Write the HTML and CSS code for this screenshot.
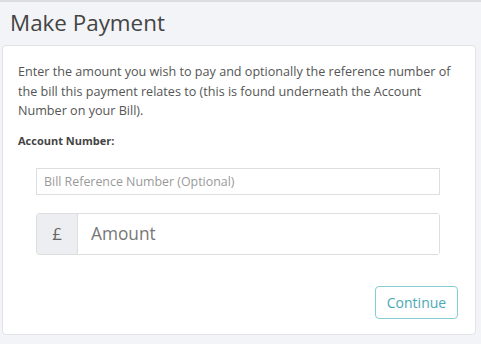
FILE: index.html
```html
<!DOCTYPE html>
<html>
<head>
<meta charset="utf-8">
<link rel="stylesheet" href="styles.css">
</head>
<body>
<div class="page">
  <h1 class="title">Make Payment</h1>
  <div class="card">
    <p class="intro">Enter the amount you wish to pay and optionally the reference number of the bill this payment relates to (this is found underneath the Account Number on your Bill).</p>
    <div class="label">Account Number:</div>
    <div class="fields">
      <input class="ref" type="text" placeholder="Bill Reference Number (Optional)">
      <div class="amount-group">
        <span class="addon">£</span>
        <input class="amount" type="text" placeholder="Amount">
      </div>
    </div>
    <div class="actions">
      <button class="continue">Continue</button>
    </div>
  </div>
</div>
</body>
</html>
```
FILE: styles.css
```css
html, body {
  margin: 0;
  padding: 0;
}
body {
  background: #f3f4f7;
  font-family: "Open Sans", "Liberation Sans", sans-serif;
  color: #555;
  width: 481px;
  height: 344px;
  overflow: hidden;
}
.page {
  border-top: 2px solid #dcdde2;
  padding: 0 5px 0 2px;
}
.title {
  margin: 0;
  padding: 5px 0 0 8px;
  height: 38px;
  font-size: 22.4px;
  font-weight: 400;
  color: #444;
  line-height: 32px;
}
.card {
  background: #fff;
  border: 1px solid #e2e3e6;
  border-radius: 4px;
  box-sizing: border-box;
  height: 290px;
  padding: 16px 15px 0 15px;
}
.intro {
  margin: 0;
  font-size: 12.6px;
  line-height: 19.5px;
  color: #555;
}
.label {
  margin-top: 12px;
  font-size: 11px;
  font-weight: 700;
  color: #444;
}
.fields {
  padding: 0 20px 0 18px;
  margin-top: 20px;
  display: flex;
  flex-direction: column;
  gap: 18px;
}
.ref {
  height: 27px;
  box-sizing: border-box;
  border: 1px solid #dedede;
  padding: 0 7px;
  font-family: inherit;
  font-size: 12.4px;
  color: #555;
  outline: none;
}
.ref::placeholder {
  color: #9a9a9a;
}
.amount-group {
  display: flex;
  height: 42px;
  box-sizing: border-box;
  border: 1px solid #dedede;
  border-radius: 3px;
}
.addon {
  width: 40px;
  background: #eceef1;
  border-right: 1px solid #dedede;
  display: flex;
  align-items: center;
  justify-content: center;
  font-size: 17px;
  color: #666;
}
.amount {
  flex: 1;
  border: none;
  padding: 0 13px;
  font-family: inherit;
  font-size: 17.3px;
  outline: none;
  min-width: 0;
}
.amount::placeholder {
  color: #777;
}
.actions {
  display: flex;
  justify-content: flex-end;
  margin-top: 31px;
  padding-right: 2px;
}
.continue {
  width: 83px;
  height: 33px;
  background: #fff;
  border: 1px solid #86cdd2;
  border-radius: 4px;
  color: #4aa9b3;
  font-family: inherit;
  font-size: 14px;
  padding: 0;
}
```
